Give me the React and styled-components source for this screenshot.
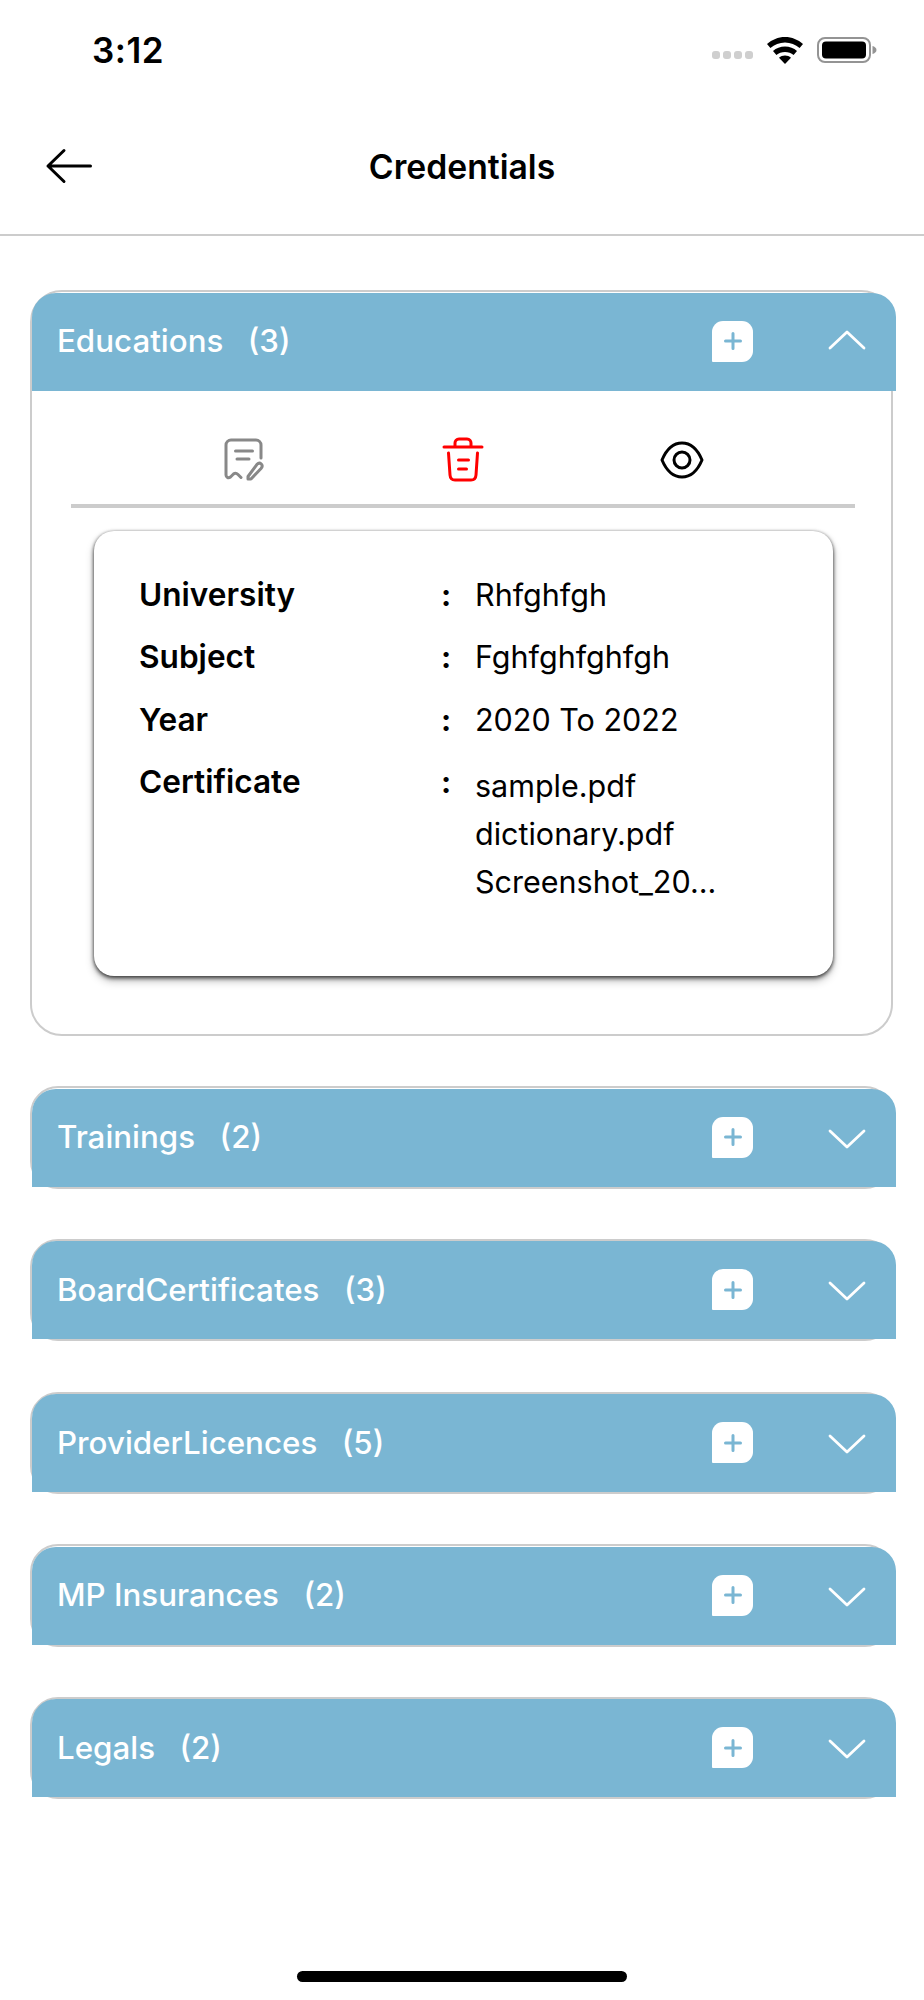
import styled, { createGlobalStyle } from 'styled-components';

const BLUE = '#7ab6d3';

const GlobalStyle = createGlobalStyle`
  html, body {
    margin: 0;
    padding: 0;
    background: #fff;
  }
  * {
    box-sizing: border-box;
  }
`;

const Screen = styled.div`
  width: 924px;
  height: 2000px;
  display: flex;
  flex-direction: column;
  background: #fff;
  font-family: Inter, 'Liberation Sans', sans-serif;
  color: #000;
  position: relative;
`;

const StatusBar = styled.div`
  height: 100px;
  display: flex;
  align-items: center;
  padding: 0 47px 0 92px;
`;

const Clock = styled.div`
  flex: 1;
  font-size: 35px;
  font-weight: 600;
  letter-spacing: 0.5px;
`;

const StatusIcons = styled.div`
  display: flex;
  align-items: center;
  gap: 14px;
`;

const SignalDots = styled.div`
  display: flex;
  gap: 3px;
  margin-top: 10px;
`;

const SignalDot = styled.span`
  width: 8px;
  height: 8px;
  border-radius: 3px;
  background: #cfcfcf;
`;

const NavBar = styled.div`
  height: 136px;
  display: flex;
  align-items: center;
  justify-content: center;
  border-bottom: 2px solid #cccccc;
  position: relative;
`;

const BackButton = styled.div`
  position: absolute;
  left: 45px;
  top: 48px;
  display: flex;
`;

const Title = styled.div`
  font-size: 33.700px;
  font-weight: 600;
  margin-bottom: 1px;
`;

const Content = styled.div`
  display: flex;
  flex-direction: column;
  gap: 50.200px;
  padding: 54px 31px 0 30px;
`;

const Section = styled.div`
  border: 2px solid #cccccc;
  border-radius: ${(p) => (p.$open ? '32px' : '28px')};
`;

const SectionHeader = styled.div`
  height: 98px;
  margin: 0.500px -5px 0 0;
  padding: 0 30px 1px 25px;
  display: flex;
  align-items: center;
  background: ${BLUE};
  border-radius: 24px 24px 0 0;
  color: #fff;
  font-size: 31.300px;
  font-weight: 500;
`;

const SectionName = styled.div`
  flex: 1;
  display: flex;
  gap: 24.500px;
`;

const AddButton = styled.div`
  width: 41px;
  height: 41px;
  margin-right: 75px;
  display: flex;
  align-items: center;
  justify-content: center;
  background: #fff;
  border-radius: 11px 11px 11px 1px;
`;

const ChevronSvg = styled.svg`
  margin-top: ${(p) => (p.$up ? '-3px' : '3px')};
`;

const SectionBody = styled.div`
  padding: 0 36px 58.500px 39px;
`;

const ActionRow = styled.div`
  height: 117px;
  display: grid;
  grid-template-columns: repeat(3, 219px);
  justify-content: center;
  justify-items: center;
  align-items: center;
  border-bottom: 4px solid #cccccc;
  margin-bottom: 23px;
  padding-top: 25px;
`;

const DetailCard = styled.div`
  margin: 0 22px 0 23px;
  height: 445px;
  padding: 44px 35px 0 45px;
  background: #fff;
  border-radius: 20px;
  box-shadow: 0 0 3px rgba(0, 0, 0, 0.2), 0 2px 4px rgba(0, 0, 0, 0.7), 0 5px 9px rgba(0, 0, 0, 0.25);
`;

const DetailRow = styled.div`
  display: grid;
  grid-template-columns: 302px 34px 1fr;
  min-height: 62.500px;
  font-size: 30.500px;
  line-height: 40px;
`;

const DetailLabel = styled.div`
  font-size: 31.600px;
  font-weight: 600;
`;

const DetailColon = styled.div`
  font-weight: 700;
`;

const DetailValue = styled.div`
  font-weight: 400;
`;

const FileList = styled.div`
  display: flex;
  flex-direction: column;
  gap: 8px;
  padding-top: 3.500px;
`;

const HomeIndicator = styled.div`
  width: 330px;
  height: 11px;
  border-radius: 6px;
  background: #000;
  position: absolute;
  left: 297px;
  top: 1971px;
`;

const EDUCATION = [
  { label: 'University', value: 'Rhfghfgh' },
  { label: 'Subject', value: 'Fghfghfghfgh' },
  { label: 'Year', value: '2020 To 2022' },
];

const FILES = ['sample.pdf', 'dictionary.pdf', 'Screenshot_20...'];

const CLOSED = [
  { name: 'Trainings', count: 2 },
  { name: 'BoardCertificates', count: 3 },
  { name: 'ProviderLicences', count: 5 },
  { name: 'MP Insurances', count: 2 },
  { name: 'Legals', count: 2 },
];

function WifiIcon() {
  return (
    <svg width="36" height="27" viewBox="0 0 36 27" fill="#000">
      <path d="M18 0C11 0 5 2.700 0 7l3.400 4C7.500 7.700 12.500 5.500 18 5.500S28.500 7.700 32.600 11L36 7C31 2.700 25 0 18 0z" />
      <path d="M18 9.500c-4.600 0-8.800 1.700-12 4.500l3.400 4c2.300-2 5.300-3.100 8.600-3.100s6.300 1.100 8.600 3.100L30 14c-3.200-2.800-7.400-4.500-12-4.500z" />
      <path d="M18 18.500c-2.300 0-4.400.8-6 2.200L18 27l6-6.300c-1.600-1.400-3.700-2.200-6-2.200z" />
    </svg>
  );
}

function BatteryIcon() {
  return (
    <svg width="60" height="26" viewBox="0 0 60 26">
      <rect x="1" y="1" width="52" height="24" rx="7" fill="none" stroke="#949494" strokeWidth="2" />
      <rect x="5" y="4.500" width="44" height="17" rx="4" fill="#000" />
      <path d="M55.500 9c2 .5 4 2 4 4s-2 3.500-4 4z" fill="#949494" />
    </svg>
  );
}

function BackArrow() {
  return (
    <svg width="48" height="36" viewBox="0 0 48 36" fill="none" stroke="#000" strokeWidth="3" strokeLinecap="round" strokeLinejoin="round">
      <path d="M45.500 18H3M19 2.500 3 18l16 15.500" />
    </svg>
  );
}

function PlusIcon() {
  return (
    <svg width="20" height="20" viewBox="0 0 20 20" fill="none" stroke={BLUE} strokeWidth="3" strokeLinecap="round">
      <path d="M10 2.500v15M2.500 10h15" />
    </svg>
  );
}

function Chevron({ up }) {
  return (
    <ChevronSvg $up={up} width="38" height="20" viewBox="0 0 38 20" fill="none" stroke="#fff" strokeWidth="2.800" strokeLinecap="round" strokeLinejoin="round">
      <path d={up ? 'M2 18 19 2l17 16' : 'M2 2l17 16L36 2'} />
    </ChevronSvg>
  );
}

function ReceiptEditIcon() {
  return (
    <svg width="40" height="43" viewBox="0 0 40 43" fill="none" stroke="#888" strokeWidth="3" strokeLinecap="round" strokeLinejoin="round">
      <path d="M37 20V7a5 5 0 0 0-5-5H7a5 5 0 0 0-5 5v30c0 2.500 2.500 3.500 4.500 2l3-3c1.500-1.200 3-1 4.500.5l3 3" />
      <path d="M11.500 13h17M13 21h12" />
      <path d="M24 38.500v2.500h3l10-10.500c1.500-1.800 1.500-3.300.3-4.500-1.300-1.200-3-1-4.300.3z" />
    </svg>
  );
}

function TrashIcon() {
  return (
    <svg width="42" height="46" viewBox="0 0 42 46" fill="none" stroke="#ff0000" strokeWidth="3" strokeLinecap="round" strokeLinejoin="round">
      <path d="M2 10h38" />
      <path d="M13 9V6c0-2.200 1.500-4 4-4h8c2.500 0 4 1.800 4 4v3" />
      <path d="M6.500 16 8 38c.2 3 2 5 5 5h16c3 0 4.800-2 5-5l1.500-22" />
      <path d="M16.500 23h10M16.500 32h8" />
    </svg>
  );
}

function EyeIcon() {
  return (
    <svg width="44" height="38" viewBox="0 0 44 38" fill="none" stroke="#000" strokeWidth="3" strokeLinecap="round" strokeLinejoin="round">
      <path d="M2 19C6 9.500 13 2 22 2s16 7.500 20 17c-4 9.500-11 17-20 17S6 28.500 2 19z" />
      <circle cx="22" cy="19" r="8" />
    </svg>
  );
}

function HeaderRow({ name, count, open }) {
  return (
    <SectionHeader>
      <SectionName>
        <span>{name}</span>
        <span>({count})</span>
      </SectionName>
      <AddButton>
        <PlusIcon />
      </AddButton>
      <Chevron up={open} />
    </SectionHeader>
  );
}

function App() {
  return (
    <Screen>
      <GlobalStyle />
      <StatusBar>
        <Clock>3:12</Clock>
        <StatusIcons>
          <SignalDots>
            <SignalDot />
            <SignalDot />
            <SignalDot />
            <SignalDot />
          </SignalDots>
          <WifiIcon />
          <BatteryIcon />
        </StatusIcons>
      </StatusBar>
      <NavBar>
        <BackButton>
          <BackArrow />
        </BackButton>
        <Title>Credentials</Title>
      </NavBar>
      <Content>
        <Section $open>
          <HeaderRow name="Educations" count={3} open />
          <SectionBody>
            <ActionRow>
              <ReceiptEditIcon />
              <TrashIcon />
              <EyeIcon />
            </ActionRow>
            <DetailCard>
              {EDUCATION.map((row) => (
                <DetailRow key={row.label}>
                  <DetailLabel>{row.label}</DetailLabel>
                  <DetailColon>:</DetailColon>
                  <DetailValue>{row.value}</DetailValue>
                </DetailRow>
              ))}
              <DetailRow>
                <DetailLabel>Certificate</DetailLabel>
                <DetailColon>:</DetailColon>
                <FileList>
                  {FILES.map((file) => (
                    <DetailValue key={file}>{file}</DetailValue>
                  ))}
                </FileList>
              </DetailRow>
            </DetailCard>
          </SectionBody>
        </Section>
        {CLOSED.map((item) => (
          <Section key={item.name}>
            <HeaderRow name={item.name} count={item.count} />
          </Section>
        ))}
      </Content>
      <HomeIndicator />
    </Screen>
  );
}

export default App;
